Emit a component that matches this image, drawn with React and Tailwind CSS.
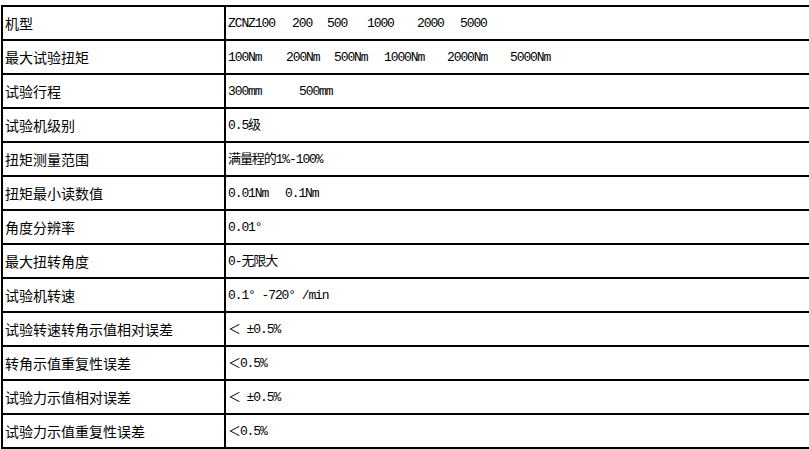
import React from "react";

const mono = "font-['Liberation_Mono','Noto_Sans_CJK_SC',monospace] text-[13px] tracking-[-1.1px]";

// tokens with fixed slot widths, so the columns line up like the original
const rows = [
  { label: "机型", slots: [["ZCNZ100", 64], ["200", 35], ["500", 40], ["1000", 50], ["2000", 43], ["5000", 40]] },
  { label: "最大试验扭矩", slots: [["100Nm", 58], ["200Nm", 48], ["500Nm", 50], ["1000Nm", 63], ["2000Nm", 63], ["5000Nm", 50]] },
  { label: "试验行程", slots: [["300mm", 71], ["500mm", 50]] },
  { label: "试验机级别", text: "0.5级" },
  { label: "扭矩测量范围", text: "满量程的1%-100%" },
  { label: "扭矩最小读数值", slots: [["0.01Nm", 57], ["0.1Nm", 50]] },
  { label: "角度分辨率", text: "0.01°" },
  { label: "最大扭转角度", text: "0-无限大" },
  { label: "试验机转速", text: "0.1° -720° /min" },
  { label: "试验转速转角示值相对误差", text: "＜ ±0.5%" },
  { label: "转角示值重复性误差", text: "＜0.5%" },
  { label: "试验力示值相对误差", text: "＜ ±0.5%" },
  { label: "试验力示值重复性误差", text: "＜0.5%" },
];

export default function App() {
  return (
    <div className="w-[809px] h-[449px] overflow-hidden bg-white pt-[5px] pl-px">
      <div className="w-[830px] border-t-2 border-l-2 border-black text-black">
        {rows.map((r) => (
          <div key={r.label} className="flex h-[34px] border-b-2 border-black">
            <div className="w-[223px] shrink-0 border-r-2 border-black flex items-center pl-[2px] font-['Noto_Sans_CJK_SC',sans-serif] text-[14px] leading-none whitespace-nowrap">
              {r.label}
            </div>
            <div className={`flex-1 flex items-center pl-[2px] leading-none whitespace-pre ${mono}`}>
              {r.slots
                ? r.slots.map(([t, w], i) => (
                    <span key={i} className="inline-block shrink-0" style={{ width: w }}>
                      {t}
                    </span>
                  ))
                : r.text}
            </div>
          </div>
        ))}
      </div>
    </div>
  );
}
